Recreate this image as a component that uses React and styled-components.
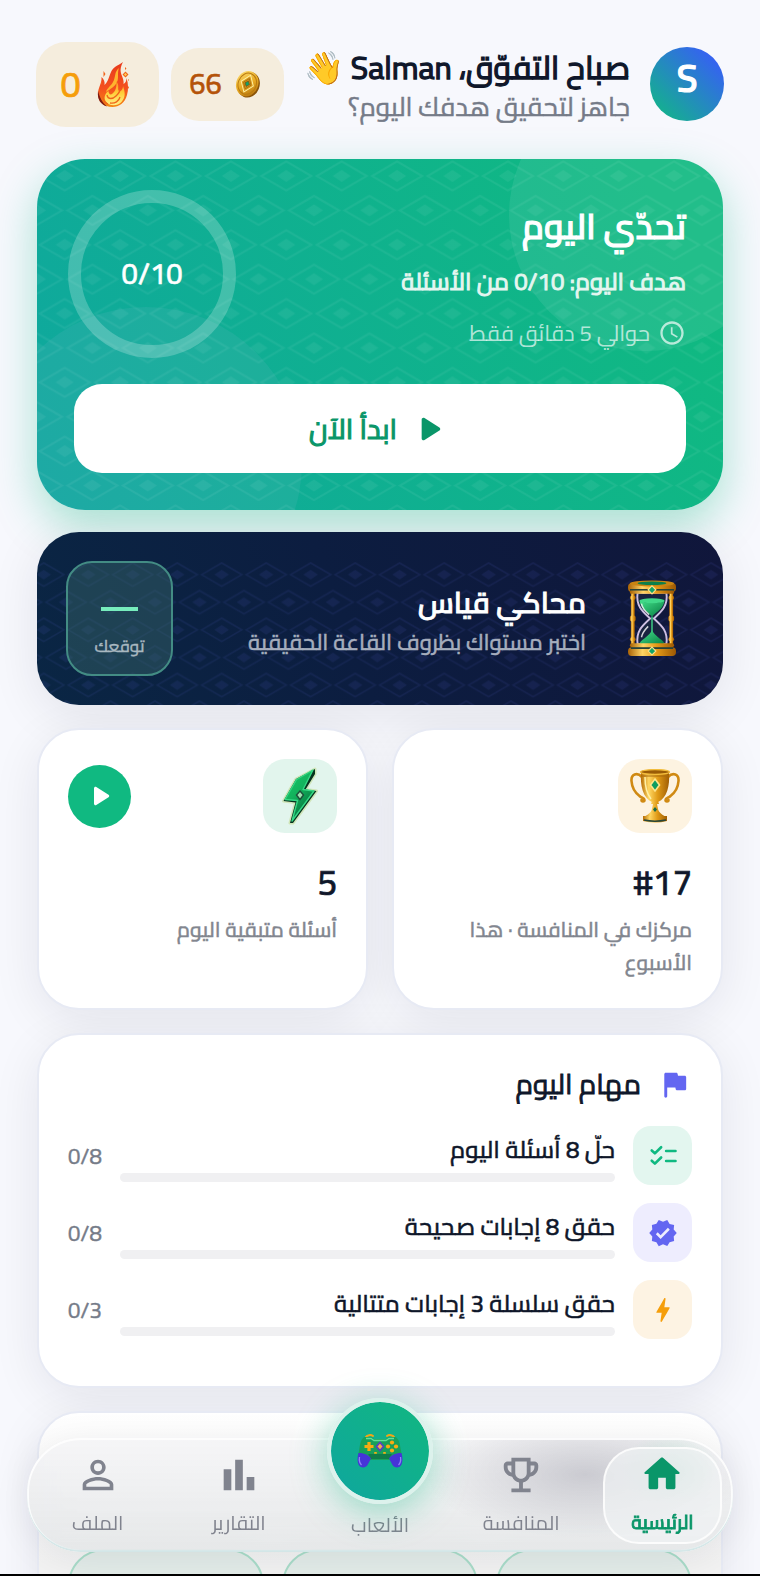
import React from 'react'
import styled, { createGlobalStyle, css } from "styled-components";
import {
  MdAccessTime,
  MdBarChart,
  MdOutlineEmojiEvents,
  MdPersonOutline,
  MdVerified,
} from "react-icons/md";

const GlobalStyle = createGlobalStyle`
  * {
    box-sizing: border-box;
  }
  body {
    margin: 0;
    background-color: #f7f8fd;
    color: #0f172a;
    font-family: Cairo, "Noto Sans Arabic", "Noto Sans", "DejaVu Sans", sans-serif;
  }
  button {
    font-family: inherit;
    border: none;
    cursor: pointer;
  }
  h1, h2, p {
    margin: 0;
  }
`;

/* light faces thickened a little, this keeps the narrow letter widths */
const thick = css`
  font-weight: 600;
  -webkit-text-stroke: 0.03em currentColor;
`;

const medium = css`
  font-weight: 500;
  -webkit-text-stroke: 0.02em currentColor;
`;

const regular = css`
  font-weight: 400;
  -webkit-text-stroke: ${p => p.$stroke || '0.02em'} currentColor;
`;

/* the shadow lies under all cards, not over the previous one */
const shade = css`
  position: relative;
  &::before {
    content: "";
    position: absolute;
    inset: 0;
    z-index: -1;
    border-radius: inherit;
    box-shadow: 0 10px 50px rgba(25, 25, 40, 0.09);
  }
`;

const Screen = styled.div`
  height: 100vh;
  display: flex;
  flex-direction: column;
  position: relative;
  overflow: hidden;
  border-bottom: 2px solid #000;
`;

const Scroll = styled.main`
  flex: 1;
  min-height: 0;
  overflow-y: auto;
  scrollbar-width: none;
`;

/* ---- header ---- */

const Header = styled.header`
  display: flex;
  align-items: center;
  padding: 41px 36px 0;
`;

const Avatar = styled.div`
  width: 74px;
  height: 74px;
  border-radius: 50%;
  flex-shrink: 0;
  display: flex;
  align-items: center;
  justify-content: center;
  color: white;
  font-size: 38px;
  line-height: 56px;
  padding-bottom: 12px;
  background: linear-gradient(225deg, #3563f0 15%, #14b08f 88%);
  ${thick}
`;

const Greeting = styled.div`
  flex: 1;
  min-width: 0;
  margin-inline-start: 20px;
  padding-top: 6px;
  white-space: nowrap;
`;

const GreetingTitle = styled.h1`
  font-size: 32px;
  line-height: 40px;
  ${regular}
  -webkit-text-stroke-width: 0.04em;
`;

const GreetingText = styled.p`
  font-size: 26px;
  line-height: 40px;
  color: #757b88;
  ${regular}
`;

const Pills = styled.div`
  display: flex;
  align-items: center;
  gap: 12px;
`;

const Pill = styled.div`
  display: flex;
  align-items: center;
  justify-content: center;
  background-color: #f5eddd;
  color: ${p => p.$color};
  font-size: ${p => p.$large ? 36 : 29}px;
  line-height: 40px;
  gap: ${p => p.$large ? 12 : 8}px;
  width: ${p => p.$large ? 123 : 113}px;
  height: ${p => p.$large ? 85 : 73}px;
  border-radius: ${p => p.$large ? 30 : 28}px;
  ${medium}
`;

/* ---- cards ---- */

const Content = styled.div`
  display: flex;
  flex-direction: column;
  gap: 23px;
  padding: 32px 37px 0;
  isolation: isolate;
`;

const Hero = styled.section`
  position: relative;
  overflow: hidden;
  border-radius: 48px;
  padding: 31px 31px 37px;
  color: white;
  background: linear-gradient(245deg, #10b981 10%, #0fa79f 100%);
`;

const HeroShadow = styled.div`
  ${shade}
  border-radius: 48px;
  margin-bottom: -1px;
  &::before {
    box-shadow: 0 16px 44px rgba(16, 185, 129, 0.34);
  }
`;

const Bubble = styled.span`
  position: absolute;
  border-radius: 50%;
  background: rgba(255, 255, 255, 0.08);
  width: ${p => p.$size}px;
  height: ${p => p.$size}px;
`;

const TopBubble = styled(Bubble)`
  top: -80px;
  right: -58px;
`;

const BottomBubble = styled(Bubble)`
  bottom: -109px;
  left: -47px;
  background: rgba(150, 195, 215, 0.11);
`;

const PatternSvg = styled.svg`
  position: absolute;
  top: ${p => p.$top || 0}px;
  left: 0;
  width: 100%;
  height: 100%;
`;

const HeroRow = styled.div`
  position: relative;
  display: flex;
  justify-content: space-between;
  align-items: center;
`;

const HeroTexts = styled.div`
  display: flex;
  flex-direction: column;
  gap: 13px;
  padding-top: 6px;
  padding-inline-start: 6px;
`;

const HeroTitle = styled.h2`
  font-size: 35px;
  line-height: 48px;
  ${thick}
`;

const HeroGoal = styled.p`
  font-size: 24px;
  line-height: 38px;
  color: #e4f6f0;
  ${regular}
  -webkit-text-stroke-width: 0.04em;
`;

const HeroTime = styled.p`
  display: flex;
  align-items: center;
  gap: 8px;
  font-size: 22px;
  font-weight: 400;
  line-height: 38px;
  color: rgba(255, 255, 255, 0.68);
`;

const Ring = styled.div`
  width: 168px;
  height: 168px;
  border-radius: 50%;
  border: 13px solid rgba(255, 255, 255, 0.22);
  display: flex;
  align-items: center;
  justify-content: center;
  font-size: 29px;
  line-height: 40px;
  ${medium}
`;

const StartButton = styled.button`
  position: relative;
  display: flex;
  align-items: center;
  justify-content: center;
  gap: 10px;
  width: calc(100% - 12px);
  height: 89px;
  margin: 26px 6px 0;
  border-radius: 28px;
  background-color: white;
  color: #0a9669;
  font-size: 28px;
  ${regular}
  -webkit-text-stroke-width: 0.04em;
`;

const SimulatorShadow = styled.div`
  ${shade}
  border-radius: 42px;
`;

const Simulator = styled.section`
  position: relative;
  overflow: hidden;
  display: flex;
  align-items: center;
  border-radius: 42px;
  padding: 29px;
  background: linear-gradient(250deg, #10163b 0%, #0c1d40 55%, #0a2644 100%);
`;

const SimulatorIcon = styled.div`
  position: relative;
  width: 84px;
  display: flex;
  justify-content: center;
`;

const SimulatorTexts = styled.div`
  position: relative;
  flex: 1;
  margin-inline-start: 24px;
  padding-top: 4px;
`;

const SimulatorTitle = styled.h2`
  color: white;
  font-size: 29px;
  line-height: 42px;
  ${thick}
`;

const SimulatorText = styled.p`
  color: #a5adbd;
  font-size: 22px;
  line-height: 36px;
  ${medium}
`;

const Guess = styled.div`
  position: relative;
  width: 107px;
  height: 115px;
  border: 2px solid #438c84;
  border-radius: 26px;
  background: rgba(60, 110, 110, 0.42);
  display: flex;
  flex-direction: column;
  align-items: center;
  justify-content: flex-end;
  gap: 18px;
  padding-bottom: 11px;
  color: #a9b8c0;
  font-size: 17px;
  line-height: 34px;
  ${medium}
`;

const Dash = styled.span`
  width: 37px;
  height: 4px;
  background-color: #77ecbd;
`;

const Stats = styled.div`
  display: grid;
  grid-template-columns: 1fr 1fr;
  gap: 24px;
`;

const Card = styled.section`
  ${shade}
  background-color: white;
  border: 2px solid #e7eaf4;
  border-radius: 42px;
  padding: 29px;
`;

const CardTop = styled.div`
  display: flex;
  align-items: center;
  justify-content: space-between;
`;

const Tile = styled.div`
  width: ${p => p.$size}px;
  height: ${p => p.$size}px;
  border-radius: ${p => p.$size > 60 ? 22 : 18}px;
  background-color: ${p => p.$bg};
  color: ${p => p.$color};
  flex-shrink: 0;
  display: flex;
  align-items: center;
  justify-content: center;
`;

const PlayButton = styled.button`
  width: 63px;
  height: 63px;
  padding: 0;
  border-radius: 50%;
  background-color: #10b981;
  color: white;
  display: flex;
  align-items: center;
  justify-content: center;
`;

const StatNumber = styled.p`
  margin-top: 25px;
  font-size: 35px;
  line-height: 48px;
  ${medium}
`;

const StatLabel = styled.p`
  margin-top: 7px;
  color: #82868f;
  font-size: 21px;
  line-height: 33px;
  ${medium}
`;

const Missions = styled(Card)`
  padding-bottom: 47px;
`;

const MissionsTitle = styled.h2`
  display: flex;
  align-items: center;
  gap: 16px;
  font-size: 28px;
  line-height: 40px;
  margin-bottom: 22px;
  ${regular}
  -webkit-text-stroke-width: 0.03em;
`;

const MissionList = styled.ul`
  list-style: none;
  margin: 0;
  padding: 0;
  display: flex;
  flex-direction: column;
  gap: 18px;
`;

const Mission = styled.li`
  display: flex;
  align-items: center;
  gap: 18px;
`;

const MissionBody = styled.div`
  flex: 1;
  height: 59px;
`;

const MissionName = styled.p`
  font-size: 24px;
  line-height: 47px;
  ${medium}
`;

const Track = styled.div`
  height: 9px;
  border-radius: 5px;
  background-color: #f0f0f2;
  overflow: hidden;
`;

const Fill = styled.div`
  height: 100%;
  background-color: ${p => p.$color};
`;

const MissionCount = styled.span`
  color: #757b88;
  font-size: 22px;
  line-height: 40px;
  ${regular}
`;

const ChipsCard = styled(Card)`
  display: grid;
  grid-template-columns: repeat(3, 1fr);
  gap: 18px;
  padding-top: 136px;
  background: linear-gradient(#ffffff, #f2f2f2 150px);
`;

const Chip = styled.div`
  height: 120px;
  border: 2px solid #a9dcc9;
  border-radius: 36px;
  background-color: #e3ece9;
`;

/* ---- bottom navigation ---- */

const Nav = styled.nav`
  position: absolute;
  left: 27px;
  right: 27px;
  bottom: 22px;
  height: 114px;
  display: flex;
  border-radius: 54px;
  background:
    radial-gradient(ellipse 160px 64px at 79% 32%, rgba(190, 190, 198, 0.75), transparent),
    radial-gradient(ellipse 50px 36px at 91% 28%, rgba(150, 225, 190, 0.5), transparent),
    linear-gradient(rgba(244, 244, 246, 0.85), rgba(229, 231, 232, 0.92));
  backdrop-filter: blur(14px);
  box-shadow:
    inset 0 -2px 1px #d3e6e7,
    inset 0 0 0 2px rgba(255, 255, 255, 0.85),
    0 6px 36px rgba(15, 23, 42, 0.08);
`;

const NavItem = styled.a`
  flex: 1;
  position: relative;
  display: flex;
  flex-direction: column;
  align-items: center;
  justify-content: flex-end;
  gap: 8px;
  padding-bottom: 12px;
  text-decoration: none;
  color: #80838e;
  font-size: 20px;
  font-weight: 400;
  line-height: 34px;
`;

const GamesItem = styled(NavItem)`
  padding-bottom: 10px;
`;

const ActiveItem = styled(NavItem)`
  margin: 9px 11px 8px;
  padding-bottom: 3px;
  border: 2px solid rgba(255, 255, 255, 0.8);
  border-radius: 36px;
  background: rgba(240, 242, 243, 0.7);
  color: #0a9669;
  font-size: 19px;
  font-weight: 600;
  -webkit-text-stroke: 0.04em currentColor;
`;

const NavSlot = styled.div`
  flex: 1;
  display: flex;
`;

const GamesCircle = styled.span`
  position: absolute;
  top: -40px;
  width: 106px;
  height: 106px;
  border-radius: 50%;
  border: 4px solid #dcf2ec;
  background: linear-gradient(225deg, #11b583 10%, #0fa89b 90%);
  background-clip: padding-box;
  box-shadow: 0 8px 36px rgba(16, 185, 129, 0.4);
  display: flex;
  align-items: center;
  justify-content: center;
`;

/* ---- drawings ---- */

const Glyph = ({ size, children }) => (
  <svg width={size} height={size} viewBox="0 0 24 24" fill="currentColor" aria-hidden="true">{children}</svg>
);

const PlayIcon = ({ size }) => (
  <Glyph size={size}>
    <path d="M8 6.82v10.36c0 .79.87 1.27 1.54.84l8.14-5.18c.62-.39.62-1.29 0-1.69L9.54 5.98C8.87 5.55 8 6.03 8 6.82z" />
  </Glyph>
);

const FlagIcon = () => (
  <Glyph size={35}>
    <path d="M14.4 6l-.24-1.2c-.09-.46-.5-.8-.98-.8H6c-.55 0-1 .45-1 1v15c0 .55.45 1 1 1s1-.45 1-1v-6h5.6l.24 1.2c.09.47.5.8.98.8H19c.55 0 1-.45 1-1V7c0-.55-.45-1-1-1h-4.6z" />
  </Glyph>
);

const HomeIcon = () => (
  <Glyph size={46}>
    <path d="M10 19v-5h4v5c0 .55.45 1 1 1h3c.55 0 1-.45 1-1v-7h1.7c.46 0 .68-.57.33-.87L12.67 3.6c-.38-.34-.96-.34-1.34 0l-8.36 7.53c-.34.3-.13.87.33.87H5v7c0 .55.45 1 1 1h3c.55 0 1-.45 1-1z" />
  </Glyph>
);

const BoltIcon = () => (
  <Glyph size={32}>
    <path d="M10.67 21c-.35 0-.62-.31-.57-.66L11 14H7.5c-.88 0-.33-.75-.31-.78 1.26-2.23 3.15-5.53 5.65-9.93.1-.18.3-.29.5-.29.35 0 .62.31.57.66l-.9 6.34h3.51c.4 0 .62.19.4.66-3.29 5.74-5.2 9.09-5.75 10.05-.1.18-.29.29-.5.29z" />
  </Glyph>
);

const ChecklistIcon = () => (
  <svg width="30" height="30" viewBox="0 0 24 24" fill="none" stroke="currentColor" strokeWidth="2.1" strokeLinecap="round" strokeLinejoin="round" aria-hidden="true">
    <path d="M3 7.600l2.500 2.300L10.500 5M3 15.800l2.500 2.300 5-4.900M14.500 8H22M14.500 16H22" />
  </svg>
);

const Flame = () => (
  <svg width="42" height="46" viewBox="-4 0 42 46" aria-hidden="true">
    <defs>
      <linearGradient id="flameOuter" x1="0" y1="0" x2="0" y2="1">
        <stop offset="0" stopColor="#e8391b" />
        <stop offset="0.6" stopColor="#f4511e" />
        <stop offset="1" stopColor="#f58a12" />
      </linearGradient>
      <linearGradient id="flameInner" x1="0" y1="0" x2="0" y2="1">
        <stop offset="0" stopColor="#ff8a1f" />
        <stop offset="0.5" stopColor="#ffcf3a" />
        <stop offset="1" stopColor="#fff08a" />
      </linearGradient>
    </defs>
    <path fill="url(#flameOuter)" d="M26 1c-3 6-3 9-1 14 1 3 2 5 1.500 8 2-1 3-3 3-6 2 6 2 12 .5 17C28 42 22 46 15.500 46 7 46 1 41 1 33c0-7 4-10 3.500-17 2.500 2 3.500 5 3 8C13 19 12 10 18 6c2.500-1.800 5-2.500 8-5z" />
    <path fill="#7d1b14" d="M1 30c-1 9 3 13.500 9 15.500-5-4.500-7-8.500-9-15.500z" />
    <path fill="#ffb32e" d="M22 7c-5 4-3 9-6 14-2 4-6 6-7 10 4-3 9-5 11-10 2-4 0-9 2-14z" />
    <path fill="url(#flameInner)" d="M19 20c4 4 1 8 3 10 2 1 4-2 4-5 2 6 3 11-1.500 16-5 5-13 4-16-1-2-4 0-8 3-10 0 3 2 4 3.500 3 4-3 5-8 4-13z" />
    <path fill="none" stroke="#f0641a" strokeWidth="1.300" d="M10 34c1 5 6 4 9 1s4-4 4-7M13 42c5 1 9-2 10-6M6 35c0 4 2 7 5 8" />
    <path fill="#f0641a" d="M6.500 10l2 3-2 3zM4 20l1 2-1 2zM28.500 10.500l3 3-3 3-3-3zM28 6l1.500 1.500L28 9zM31 25l1 1.500-1 1.500zM31 18l1 1-1 1z" />
    <path fill="#ffd05a" d="M28.500 12l1.500 1.500-1.500 1.500-1.500-1.500z" />
  </svg>
);

const Coin = () => (
  <svg width="36" height="28" viewBox="-4 0 36 28" aria-hidden="true">
    <defs>
      <linearGradient id="coinFace" x1="0" y1="0" x2="1" y2="1">
        <stop offset="0" stopColor="#ffe27a" />
        <stop offset="0.5" stopColor="#e9ac25" />
        <stop offset="1" stopColor="#a96708" />
      </linearGradient>
    </defs>
    <g transform="rotate(22 14 14)">
      <ellipse cx="15" cy="14.500" rx="10.800" ry="13" fill="#8a5408" />
      <ellipse cx="13.200" cy="14" rx="11" ry="13" fill="url(#coinFace)" />
      <ellipse cx="13.200" cy="14" rx="9" ry="10.800" fill="none" stroke="#b97a10" strokeWidth="1" />
      <path d="M13.200 5l6.500 9-6.500 9-6.500-9z" fill="#d99a1c" stroke="#fff0a0" strokeWidth="1" />
      <path d="M13.200 8.500l4 5.500-4 5.500-4-5.500z" fill="none" stroke="#a56a0c" strokeWidth="0.800" />
      <path d="M13.200 11l2.400 3-2.400 3-2.400-3z" fill="#14a06a" stroke="#7a4a08" strokeWidth="0.600" />
    </g>
  </svg>
);

const Hourglass = () => (
  <svg width="48" height="77" viewBox="0 0 50 78" preserveAspectRatio="none" aria-hidden="true">
    <defs>
      <linearGradient id="hgGold" x1="0" y1="0" x2="1" y2="0">
        <stop offset="0" stopColor="#a96205" />
        <stop offset="0.3" stopColor="#ffd566" />
        <stop offset="0.6" stopColor="#e59a17" />
        <stop offset="1" stopColor="#9c5804" />
      </linearGradient>
      <linearGradient id="hgSand" x1="0" y1="0" x2="1" y2="1">
        <stop offset="0" stopColor="#45e08a" />
        <stop offset="1" stopColor="#047a41" />
      </linearGradient>
    </defs>
    <path d="M10 13h30c2 13-5 19-13 26 8 7 15 13 13 26H10C8 52 15 46 23 39 15 32 8 26 10 13z" fill="#18233f" stroke="#cdbfe2" strokeWidth="2" />
    <path d="M12 21c8 3 18 3 26 0-1 8-8 11-13 16-5-5-12-8-13-16z" fill="url(#hgSand)" />
    <ellipse cx="25" cy="21" rx="13" ry="2.500" fill="#41d888" />
    <path d="M25 37v16" stroke="#3fd58a" strokeWidth="1.500" />
    <path d="M25 51c3 6 9 8 13 13-7 3-19 3-26 0 4-5 10-7 13-13z" fill="url(#hgSand)" />
    <path d="M14 24c1 5 4 8 8 11M14 58c1-5 4-8 7-11" stroke="#ffffff" strokeWidth="1.500" fill="none" opacity="0.8" />
    {[3, 43].map(x => (
      <g key={x} fill="url(#hgGold)">
        <rect x={x} y="12" width="4" height="54" rx="2" />
        <rect x={x - 1} y="16" width="6" height="4" rx="2" />
        <rect x={x - 1} y="36" width="6" height="6" rx="2" />
        <rect x={x - 1} y="58" width="6" height="4" rx="2" />
      </g>
    ))}
    <rect x="0" y="3" width="50" height="9" rx="4" fill="url(#hgGold)" />
    <ellipse cx="25" cy="3.500" rx="23" ry="3" fill="#c98412" />
    <ellipse cx="25" cy="3.200" rx="15" ry="1.800" fill="#0b7f4b" />
    <path d="M2 10h46" stroke="#25423a" strokeWidth="1.800" />
    <rect x="2" y="11" width="46" height="3" rx="1" fill="url(#hgGold)" />
    <rect x="2" y="64" width="46" height="4" rx="2" fill="url(#hgGold)" />
    <rect x="0" y="68" width="50" height="9" rx="4" fill="url(#hgGold)" />
    <path d="M3 69h44" stroke="#25423a" strokeWidth="1.800" />
    <path d="M25 6l4 4-4 4-4-4zM25 68l4 4-4 4-4-4z" fill="#13a566" stroke="#ffe08a" strokeWidth="1.200" />
  </svg>
);

const Trophy = () => (
  <svg width="50" height="54" viewBox="0 0 50 54" aria-hidden="true">
    <defs>
      <linearGradient id="cupGold" x1="0" y1="0" x2="1" y2="0">
        <stop offset="0" stopColor="#b56c05" />
        <stop offset="0.28" stopColor="#ffd763" />
        <stop offset="0.6" stopColor="#e09a16" />
        <stop offset="1" stopColor="#a05e04" />
      </linearGradient>
    </defs>
    <path d="M12 8C7 3 1 5 1.500 12c.5 7 4 12 8 15 2 2 5 2 5 4 0 2-3 2-3 0M38 8c5-5 11-3 10.500 4-.5 7-4 12-8 15-2 2-5 2-5 4 0 2 3 2 3 0" fill="none" stroke="#d08a13" strokeWidth="2.600" strokeLinecap="round" />
    <path d="M11 3h28c1 14-2 26-11 30h-6C13 29 10 17 11 3z" fill="url(#cupGold)" />
    <ellipse cx="25" cy="3" rx="14.500" ry="2.400" fill="#9a5c06" stroke="#f3bd3c" strokeWidth="1.300" />
    <path d="M15 8c0 9 2 17 6 22" stroke="#fff0a6" strokeWidth="1.500" fill="none" />
    <path d="M11 7h28" stroke="#a96a0a" strokeWidth="1" />
    <path d="M25 10l4.500 6-4.500 6-4.500-6z" fill="#0f9d60" stroke="#ffe58a" strokeWidth="1.600" />
    <path d="M22 32h6l1 3h-2l1 5c1 4 5 6 8 8H14c3-2 7-4 8-8l1-5h-2z" fill="url(#cupGold)" />
    <path d="M25 38l2 2.500-2 2.500-2-2.500z" fill="#1a6b48" />
    <path d="M13 47h24v5c-8 2-16 2-24 0z" fill="url(#cupGold)" />
    <path d="M14 51c7 1.500 15 1.500 22 0" stroke="#274538" strokeWidth="1.600" fill="none" />
  </svg>
);

const BigBolt = () => (
  <svg width="36" height="58" viewBox="0 0 36 58" aria-hidden="true">
    <defs>
      <linearGradient id="boltGreen" x1="0" y1="0" x2="0.600" y2="1">
        <stop offset="0" stopColor="#14c96b" />
        <stop offset="0.5" stopColor="#12b35c" />
        <stop offset="1" stopColor="#056b3b" />
      </linearGradient>
    </defs>
    <path d="M33 2L14 12 1.500 34l12 1.500L8 56l3 0L34.500 24l-11-1.500L33 7z" fill="none" stroke="#cfe5b8" strokeWidth="3" strokeLinejoin="round" />
    <path d="M33 2L14 12 1.500 34l12 1.500L8 56l3 0L34.500 24l-11-1.500L33 7z" fill="#07331f" />
    <path d="M31 3L14.500 12.500 3 32.500l12.500 1L10 54 32 24l-11-1.500z" fill="url(#boltGreen)" stroke="#35d884" strokeWidth="1.400" strokeLinejoin="round" />
    <path d="M18 24l3.500 4-3.500 4.500-3.500-4.500z" fill="#9be3ae" stroke="#1c4f3a" strokeWidth="1.400" />
  </svg>
);

const Gamepad = () => (
  <svg width="46" height="34" viewBox="0 0 46 34" aria-hidden="true">
    <path d="M9 3c1-2 5-2.500 7-1M37 3c-1-2-5-2.500-7-1" stroke="#f2a516" strokeWidth="2" strokeLinecap="round" fill="none" />
    <path d="M8 3h6l3 2h12l3-2h6c4 1 5 7 6 14l1 5-11 4H12L1 22l1-5C3 10 4 4 8 3z" fill="#18a05a" />
    <path d="M9 4.500h5l3 2h12l3-2h5" stroke="#5fe09a" strokeWidth="1.300" fill="none" />
    <path d="M11 20h24l-3 5H14z" fill="#0f7d4a" />
    <path d="M1.500 19c5 0 10 1.500 12.500 5.500L10.500 31C8.500 34.500 3 34 1.500 30.500 0 27 .5 22.500 1.500 19zM44.500 19c-5 0-10 1.500-12.500 5.500l3.500 6.500c2 3.500 7.500 3 9-.5 1.500-3.500 1-8 0-11.500z" fill="#4634d8" />
    <path d="M2.500 23c-.5 3 0 6 2 8M43.500 23c.5 3 0 6-2 8" stroke="#8d84f5" strokeWidth="1.300" fill="none" />
    <path d="M12 8v9M7.500 12.500h9" stroke="#f8ac12" strokeWidth="3.200" />
    <g fill="#f8ac12">
      <circle cx="35" cy="8.500" r="2.100" />
      <circle cx="35" cy="16.500" r="2.100" />
      <circle cx="31" cy="12.500" r="2.100" />
      <circle cx="39" cy="12.500" r="2.100" />
      <rect x="17" y="18" width="3" height="1.800" rx="1" />
      <rect x="26" y="18" width="3" height="1.800" rx="1" />
    </g>
    <path d="M23 8.500l3.500 4-3.500 4-3.500-4z" fill="#f0b04a" stroke="#5a3bc4" strokeWidth="1.600" />
  </svg>
);

const Pattern = ({ id, scale, shift, top, color }) => (
  <PatternSvg $top={top} aria-hidden="true">
    <defs>
      <pattern id={id} width="55.4" height="68.8" patternUnits="userSpaceOnUse" patternTransform={`translate(${shift} 0) scale(${scale})`}>
        {[[27.7, 17], [0, 51.4], [55.4, 51.4]].map(([x, y]) => (
          <g key={x}>
            <path d={`M${x - 25} ${y}l25-14.500 25 14.500-25 14.500z`} fill="none" stroke={color} strokeWidth="2" />
            <path d={`M${x - 9} ${y}l9-6 9 6-9 6z`} fill={color} />
          </g>
        ))}
      </pattern>
    </defs>
    <rect width="100%" height="100%" fill={`url(#${id})`} />
  </PatternSvg>
);

const missions = [
  { name: 'حلّ 8 أسئلة اليوم', done: 0, total: 8, color: '#10b981', bg: '#e3f6ef', icon: <ChecklistIcon /> },
  { name: 'حقق 8 إجابات صحيحة', done: 0, total: 8, color: '#6366f1', bg: '#eeedfe', icon: <MdVerified size={30} /> },
  { name: 'حقق سلسلة 3 إجابات متتالية', done: 0, total: 3, color: '#f59e0b', bg: '#fdf3e3', icon: <BoltIcon /> },
];

export default function App() {
  return (
    <Screen dir="rtl" lang="ar">
      <GlobalStyle />
      <Scroll>
        <Header>
          <Avatar>S</Avatar>
          <Greeting>
            <GreetingTitle>صباح التفوّق، Salman 👋</GreetingTitle>
            <GreetingText>جاهز لتحقيق هدفك اليوم؟</GreetingText>
          </Greeting>
          <Pills>
            <Pill $color="#b45309"><Coin />66</Pill>
            <Pill $large $color="#f59e0b"><Flame />0</Pill>
          </Pills>
        </Header>

        <Content>
          <HeroShadow>
            <Hero>
              <TopBubble $size={272} />
              <BottomBubble $size={312} />
              <Pattern id="heroPattern" scale={1} shift={0} color="rgba(255,255,255,0.06)" />
              <HeroRow>
                <HeroTexts>
                  <HeroTitle>تحدّي اليوم</HeroTitle>
                  <HeroGoal>هدف اليوم: 0/10 من الأسئلة</HeroGoal>
                  <HeroTime><MdAccessTime size={28} />حوالي 5 دقائق فقط</HeroTime>
                </HeroTexts>
                <Ring>0/10</Ring>
              </HeroRow>
              <StartButton type="button"><PlayIcon size={44} />ابدأ الآن</StartButton>
            </Hero>
          </HeroShadow>

          <SimulatorShadow>
            <Simulator>
              <Pattern id="simPattern" scale={0.803} shift={29} top={29} color="rgba(90,100,220,0.11)" />
              <SimulatorIcon><Hourglass /></SimulatorIcon>
              <SimulatorTexts>
                <SimulatorTitle>محاكي قياس</SimulatorTitle>
                <SimulatorText>اختبر مستواك بظروف القاعة الحقيقية</SimulatorText>
              </SimulatorTexts>
              <Guess><Dash />توقعك</Guess>
            </Simulator>
          </SimulatorShadow>

          <Stats>
            <Card>
              <CardTop>
                <Tile $size={74} $bg="#fdf3e1"><Trophy /></Tile>
              </CardTop>
              <StatNumber><bdi dir="ltr">#17</bdi></StatNumber>
              <StatLabel>مركزك في المنافسة · هذا الأسبوع</StatLabel>
            </Card>
            <Card>
              <CardTop>
                <Tile $size={74} $bg="#e2f5ed"><BigBolt /></Tile>
                <PlayButton type="button" aria-label="ابدأ"><PlayIcon size={36} /></PlayButton>
              </CardTop>
              <StatNumber>5</StatNumber>
              <StatLabel>أسئلة متبقية اليوم</StatLabel>
            </Card>
          </Stats>

          <Missions>
            <MissionsTitle>
              <Tile as="span" $size={35} $color="#6366f1"><FlagIcon /></Tile>
              مهام اليوم
            </MissionsTitle>
            <MissionList>
              {missions.map(m => (
                <Mission key={m.name}>
                  <Tile $size={59} $bg={m.bg} $color={m.color}>{m.icon}</Tile>
                  <MissionBody>
                    <MissionName>{m.name}</MissionName>
                    <Track><Fill $color={m.color} style={{ width: `${m.done / m.total * 100}%` }} /></Track>
                  </MissionBody>
                  <MissionCount>{m.done}/{m.total}</MissionCount>
                </Mission>
              ))}
            </MissionList>
          </Missions>

          <ChipsCard>
            <Chip />
            <Chip />
            <Chip />
          </ChipsCard>
        </Content>
      </Scroll>

      <Nav>
        <NavSlot>
          <ActiveItem href="#home"><HomeIcon />الرئيسية</ActiveItem>
        </NavSlot>
        <NavItem href="#compete"><MdOutlineEmojiEvents size={46} />المنافسة</NavItem>
        <GamesItem href="#games"><GamesCircle><Gamepad /></GamesCircle>الألعاب</GamesItem>
        <NavItem href="#reports"><MdBarChart size={46} />التقارير</NavItem>
        <NavItem href="#profile"><MdPersonOutline size={46} />الملف</NavItem>
      </Nav>
    </Screen>
  )
}
